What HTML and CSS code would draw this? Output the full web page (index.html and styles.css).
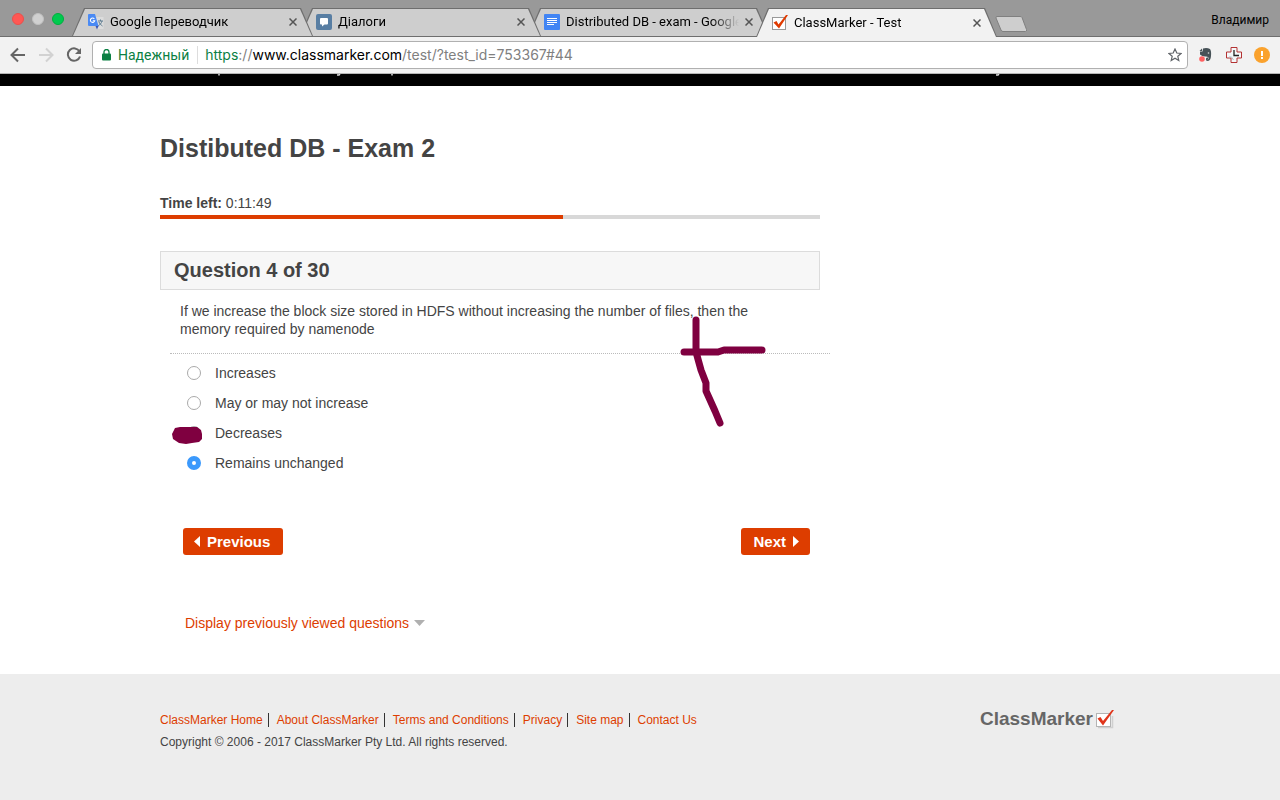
FILE: index.html
```html
<!DOCTYPE html>
<html lang="en">
<head>
<meta charset="utf-8">
<title>ClassMarker - Test</title>
<link rel="stylesheet" href="styles.css">
</head>
<body>
<div class="browser">
  <div class="tabstrip">
    <div class="lights">
      <button class="light red" aria-label="Close"></button>
      <button class="light grey" aria-label="Minimise"></button>
      <button class="light green" aria-label="Zoom"></button>
    </div>
    <div class="tabs" role="tablist">
      <div class="tab first" role="tab">
        <svg class="favicon" viewBox="0 0 16 16"><path d="M7 3h8.500v12H9z" fill="#dcdcdc"/><path d="M10 7h5M12.500 5.500V7M14 7c-.5 2-2 4-4 5M11 8c.5 1.500 2 3 3.500 4" stroke="#5f7d91" fill="none"/><path d="M1 0h6l3.500 12H1a1 1 0 0 1-1-1V1a1 1 0 0 1 1-1z" fill="#4a8af4"/><path d="M7.500 12h3l-1.500 3.500z" fill="#3855b5"/><path d="M6.300 4.800a2.200 2.200 0 1 0 .4 2H4.800" stroke="#fff" fill="none" stroke-width="1.100"/></svg>
        <span class="tab-title">Google Переводчик</span>
        <button class="tab-close" aria-label="Close tab"><svg viewBox="0 0 8 8"><path d="M.5.5l7 7M7.500.5l-7 7"/></svg></button>
      </div>
      <div class="tab second" role="tab">
        <svg class="favicon" viewBox="0 0 16 16"><rect width="16" height="16" rx="2" fill="#587ea3"/><path d="M5 4h6a1 1 0 0 1 1 1v4.500a1 1 0 0 1-1 1H8.500L6 12.500v-2H5a1 1 0 0 1-1-1V5a1 1 0 0 1 1-1z" fill="#fff"/></svg>
        <span class="tab-title">Діалоги</span>
        <button class="tab-close" aria-label="Close tab"><svg viewBox="0 0 8 8"><path d="M.5.5l7 7M7.500.5l-7 7"/></svg></button>
      </div>
      <div class="tab third" role="tab">
        <svg class="favicon" viewBox="0 0 16 16"><rect width="16" height="16" rx="1" fill="#4285f4"/><path d="M3 4.500h10M3 6.500h10M3 8.500h10M3 10.500h7" stroke="#fff"/></svg>
        <span class="tab-title">Distributed DB - exam - Google</span>
        <button class="tab-close" aria-label="Close tab"><svg viewBox="0 0 8 8"><path d="M.5.5l7 7M7.500.5l-7 7"/></svg></button>
      </div>
      <div class="tab active" role="tab" aria-selected="true">
        <svg class="favicon" viewBox="0 0 16 16"><rect x=".5" y="2.500" width="13" height="12" fill="#fff" stroke="#999"/><path d="M1.500 7.500L4.500 6 6.500 9.500 14 0h2L7 13.500z" fill="#e03a00"/></svg>
        <span class="tab-title">ClassMarker - Test</span>
        <button class="tab-close" aria-label="Close tab"><svg viewBox="0 0 8 8"><path d="M.5.5l7 7M7.500.5l-7 7"/></svg></button>
      </div>
    </div>
    <button class="new-tab" aria-label="New tab"><svg viewBox="0 0 34 17"><path d="M3 .5h23q1.500 0 2 1l4.500 12q.5 2-1 2H9q-1.500 0-2-1.500L2 2Q1.500.5 3 .5z" fill="#cecece" stroke="#808080"/></svg></button>
    <button class="profile">Владимир</button>
  </div>
  <div class="toolbar">
    <button class="nav-button" aria-label="Back"><svg viewBox="0 0 16 16" stroke="#656565"><path d="M15 8H2M8 1.500L1.500 8 8 14.500"/></svg></button>
    <button class="nav-button" aria-label="Forward"><svg viewBox="0 0 16 16" stroke="#d2d2d2"><path d="M1 8h13M8 1.500L14.500 8 8 14.500"/></svg></button>
    <button class="nav-button" aria-label="Reload"><svg viewBox="0 0 16 16" stroke="#656565"><path d="M13.500 4.500A6.200 6.200 0 1 0 14 9.500"/><path d="M15 1v6H9z" fill="#656565" stroke="none"/></svg></button>
    <div class="address">
      <svg class="lock" viewBox="0 0 9 12"><rect y="4.500" width="9" height="7" rx="1" fill="#0b8043"/><path d="M2 5V3a2.500 2.500 0 0 1 5 0v2" fill="none" stroke="#0b8043" stroke-width="1.300"/></svg>
      <span class="secure">Надежный</span>
      <div class="url" role="textbox" aria-label="Address" contenteditable="true" spellcheck="false"><span class="scheme">https</span><span class="dim">://</span>www.classmarker.com<span class="dim">/test/?test_id=753367#44</span></div>
      <button class="star" aria-label="Bookmark"><svg viewBox="0 0 14 14"><path d="M7 1l1.800 4 4.300.4-3.300 2.900 1 4.300L7 10.300l-3.800 2.300 1-4.300L.9 5.400 5.200 5z" fill="none" stroke="#5f6368" stroke-width="1.200"/></svg></button>
    </div>
    <div class="extensions">
      <button class="extension" aria-label="Web clipper"><svg viewBox="0 0 16 16"><path d="M5 1.500Q9 .5 12 2q1.500 2 1 7-.3 4.500-3 5-2.500.2-2-2.500.5-1.500 2-1v1.500Q9 12 9.500 12.500q1.500 0 1-2Q9 9 7 9.500 4 9.500 2 7.500V4.500H4.500z" fill="#475257"/><path d="M1.500 4L4 1.500V4z" fill="#475257"/><circle cx="10.500" cy="6" r=".8" fill="#ddd"/><circle cx="4" cy="12" r="2.800" fill="#ff6161"/></svg></button>
      <button class="extension" aria-label="Clock"><svg viewBox="0 0 16 16"><path d="M5 .5h6V5h4.500v6H11v4.500H5V11H.5V5H5z" fill="#f4f8fa" stroke="#b33232"/><path d="M8 3v5.500h5" fill="none" stroke="#222" stroke-width="1.300"/><path d="M3 10h2.500l2 3" fill="none" stroke="#b7c0c7"/></svg></button>
      <button class="extension" aria-label="Update"><svg viewBox="0 0 16 16"><circle cx="8" cy="8" r="8" fill="#faa22d"/><path d="M7 4h2v5H7zM7 10h2v2H7z" fill="#fff"/></svg></button>
    </div>
  </div>
</div>

<header class="site-header">
  <svg class="tails" viewBox="0 0 960 3"><path d="M59 0v1.500M177 1h2l1-1M232 0v1.500M836 1h2l1-1" fill="none" stroke="#ddd" stroke-width="1.500"/></svg>
</header>

<main class="page">
  <div class="exam">
    <h1 class="exam-title">Distibuted DB - Exam 2</h1>
    <p class="time"><strong>Time left:</strong> 0:11:49</p>
    <div class="progress" role="progressbar" aria-label="Time used" aria-valuenow="61"><div class="progress-fill" style="width:61%"></div></div>
    <form class="question">
      <h2 class="question-title">Question 4 of 30</h2>
      <p class="question-text">If we increase the block size stored in HDFS without increasing the number of files, then the memory required by namenode</p>
      <div class="options">
        <label class="option"><input class="radio" type="radio" name="answer">Increases</label>
        <label class="option"><input class="radio" type="radio" name="answer">May or may not increase</label>
        <label class="option"><input class="radio" type="radio" name="answer">Decreases</label>
        <label class="option"><input class="radio" type="radio" name="answer" checked>Remains unchanged</label>
      </div>
      <svg class="ink cross" viewBox="0 0 86 112"><path d="M16 4v29M4 36h34l6-2h38M16 36l5 18 5 13v8l9 20 5 12"/></svg>
      <svg class="ink blot" viewBox="0 0 32 18"><path d="M4 2l5-1h17l4 3 1 4v5l-3 3-7 1-6 1-7-1-3-2-3-2-1-5z"/></svg>
      <div class="actions">
        <button class="action previous" type="button"><svg class="arrow" viewBox="0 0 6 11"><path d="M6 0v11L0 5.500z"/></svg>Previous</button>
        <button class="action next" type="button">Next<svg class="arrow" viewBox="0 0 6 11"><path d="M0 0v11l6-5.500z"/></svg></button>
      </div>
    </form>
    <a class="viewed" href="#viewed">Display previously viewed questions<svg class="caret" viewBox="0 0 11 6"><path d="M0 0h11L5.500 6z"/></svg></a>
  </div>
</main>

<footer class="footer">
  <div class="footer-inner">
    <div>
      <nav class="links">
        <a href="#home">ClassMarker Home</a>
        <a href="#about">About ClassMarker</a>
        <a href="#terms">Terms and Conditions</a>
        <a href="#privacy">Privacy</a>
        <a href="#map">Site map</a>
        <a href="#contact">Contact Us</a>
      </nav>
      <p class="copyright">Copyright © 2006 - 2017 ClassMarker Pty Ltd. All rights reserved.</p>
    </div>
    <a class="brand" href="#home">ClassMarker<svg class="brand-mark" viewBox="0 0 19 19"><path d="M3 17.500h14.500V6" fill="none" stroke="#d0d0d0" stroke-width="1.500"/><rect x="1.500" y="3.500" width="14" height="13" fill="#fff" stroke="#b4b4b4"/><path d="M2.500 8.500L5.500 7 8 11 17 0h2L8 15.500z" fill="#e0351b"/></svg></a>
  </div>
</footer>
</body>
</html>
```
FILE: styles.css
```css
* { box-sizing: border-box; }

body {
  margin: 0;
  min-height: 100vh;
  display: flex;
  flex-direction: column;
  background: #fff;
  color: #444;
  font: 14px/18px "Liberation Sans", Arial, sans-serif;
}

h1, h2, p { margin: 0; }
button { margin: 0; padding: 0; border: 0; background: none; font: inherit; color: inherit; }
svg { display: block; flex: none; }
a { color: #dd3d00; text-decoration: none; }

/* Browser window */
.browser { font-family: Roboto, "Noto Sans", sans-serif; color: #000; }

.tabstrip {
  display: flex;
  height: 37px;
  padding: 8px 11px 0 12px;
  background: #999;
  border-bottom: 1px solid #6e6e6e;
}
.lights { display: flex; gap: 8px; width: 60px; padding-top: 5px; }
.light { width: 12px; height: 12px; border-radius: 50%; }
.red { background: #ff5753; border: 1px solid #e9504b; }
.grey { background: #d0d0d0; border: 1px solid #c0c0c0; }
.green { background: #00ca4f; border: 1px solid #00af3e; }

.tabs { display: flex; flex: 0 1 925px; min-width: 0; }
.tab {
  position: relative;
  display: flex;
  flex: 1 1 0;
  align-items: center;
  min-width: 0;
  margin-right: -13px;
  padding: 0 16px;
  gap: 6px;
  background: #6e6e6e;
  clip-path: polygon(12px 0, calc(100% - 12px) 0, 100% 100%, 0 100%);
}
.tab:last-child { margin-right: 0; }
.tab > * { position: relative; }
.tab::before {
  content: "";
  position: absolute;
  inset: 1px 1px 0;
  background: #cecece;
  clip-path: polygon(12px 0, calc(100% - 12px) 0, 100% 100%, 0 100%);
}
.first { z-index: 3; }
.second { z-index: 2; }
.third { z-index: 1; }
.active { z-index: 4; height: 29px; }
.active::before { background: #f2f2f2; }
.favicon { width: 16px; height: 16px; }
.tab-title {
  flex: 1;
  overflow: hidden;
  white-space: nowrap;
  font-size: 13px;
  -webkit-mask-image: linear-gradient(to right, #000 calc(100% - 28px), transparent);
  mask-image: linear-gradient(to right, #000 calc(100% - 28px), transparent);
}
.tab-close { width: 8px; height: 8px; }
.tab-close svg { width: 8px; stroke: #555; stroke-width: 1.5; }
.new-tab { align-self: flex-start; margin: 8px 0 0 -3px; }
.new-tab svg { width: 34px; height: 17px; }
.profile { align-self: flex-start; margin-left: auto; padding-top: 3px; font-size: 12px; }

.toolbar {
  display: flex;
  align-items: center;
  gap: 12px;
  height: 37px;
  padding: 0 10px;
  background: #f2f2f2;
  border-bottom: 1px solid #b5b5b5;
}
.nav-button svg { width: 16px; height: 16px; fill: none; stroke-width: 2; }
.address {
  display: flex;
  flex: 1;
  align-items: center;
  height: 28px;
  margin: 0 -2px;
  padding: 0 5px 0 9px;
  background: #fff;
  border: 1px solid #b0b0b0;
  border-radius: 4px;
  font-size: 14px;
  white-space: nowrap;
}
.lock { width: 9px; height: 12px; }
.secure { padding: 0 8px 0 7px; border-right: 1px solid #ddd; color: #0b8043; }
.url { flex: 1; min-width: 0; overflow: hidden; padding-left: 7px; outline: none; font-family: Inter, Roboto, sans-serif; }
.scheme { color: #0b8043; }
.dim { color: #808080; }
.star svg { width: 14px; height: 14px; }
.extensions { display: flex; gap: 12px; }
.extension svg { width: 16px; height: 16px; }

/* Site */
.site-header { height: 12px; background: #000; }
.tails { width: 960px; height: 3px; margin: 0 auto; }
.page { width: 100%; max-width: 960px; margin: 0 auto; flex: 1; }
.exam { max-width: 660px; padding: 46px 0 42px; }
.exam-title { font-size: 25px; line-height: 32px; }
.time { margin-top: 30px; }
.progress { height: 4px; margin-top: 3px; background: #d8d8d8; }
.progress-fill { height: 100%; background: #dd3d00; }

.question { position: relative; margin-top: 32px; }
.question-title {
  padding: 7px 13px;
  background: #f7f7f7;
  border: 1px solid #dcdcdc;
  font-size: 20px;
  line-height: 23px;
}
.question-text { padding: 12px 60px 15px 20px; }
.options { margin: 0 -10px 0 10px; padding: 4px 17px 0; border-top: 1px dotted #bbb; }
.option { display: flex; align-items: center; gap: 14px; height: 30px; }
.radio {
  appearance: none;
  width: 14px;
  height: 14px;
  margin: 0;
  border: 1px solid #aaa;
  border-radius: 50%;
  background: #fff;
}
.radio:checked { border: 5px solid #3b99fc; }
.actions { display: flex; justify-content: space-between; padding: 50px 10px 0 23px; }
.action {
  display: flex;
  align-items: center;
  gap: 7px;
  height: 27px;
  border-radius: 3px;
  background: #dd3d00;
  color: #fff;
  font-size: 15px;
  font-weight: bold;
}
.previous { padding: 0 13px 0 11px; }
.next { padding: 0 11px 0 12px; }
.arrow { width: 6px; height: 11px; fill: #fff; }

.ink { position: absolute; }
.cross { left: 520px; top: 65px; width: 86px; height: 112px; fill: none; stroke: #7f0040; stroke-width: 7; stroke-linecap: round; stroke-linejoin: round; }
.blot { left: 11px; top: 175px; width: 32px; height: 18px; fill: #7f0040; }

.viewed { display: inline-flex; align-items: center; gap: 5px; margin: 59px 0 0 25px; }
.caret { width: 11px; height: 6px; fill: #b0b0b0; }

.footer { min-height: 126px; padding: 35px 0; background: #ededed; font-size: 12px; }
.footer-inner { display: flex; justify-content: space-between; max-width: 960px; margin: 0 auto; }
.links { display: flex; align-items: center; height: 22px; }
.links a { line-height: 14px; }
.links a + a { margin-left: 5px; padding-left: 8px; border-left: 1px solid #333; }
.copyright { padding-top: 2px; }
.brand { display: flex; align-items: center; gap: 2px; height: 20px; margin-right: 6px; color: #666; font-size: 19px; font-weight: bold; }
.brand-mark { width: 19px; height: 19px; }
```
